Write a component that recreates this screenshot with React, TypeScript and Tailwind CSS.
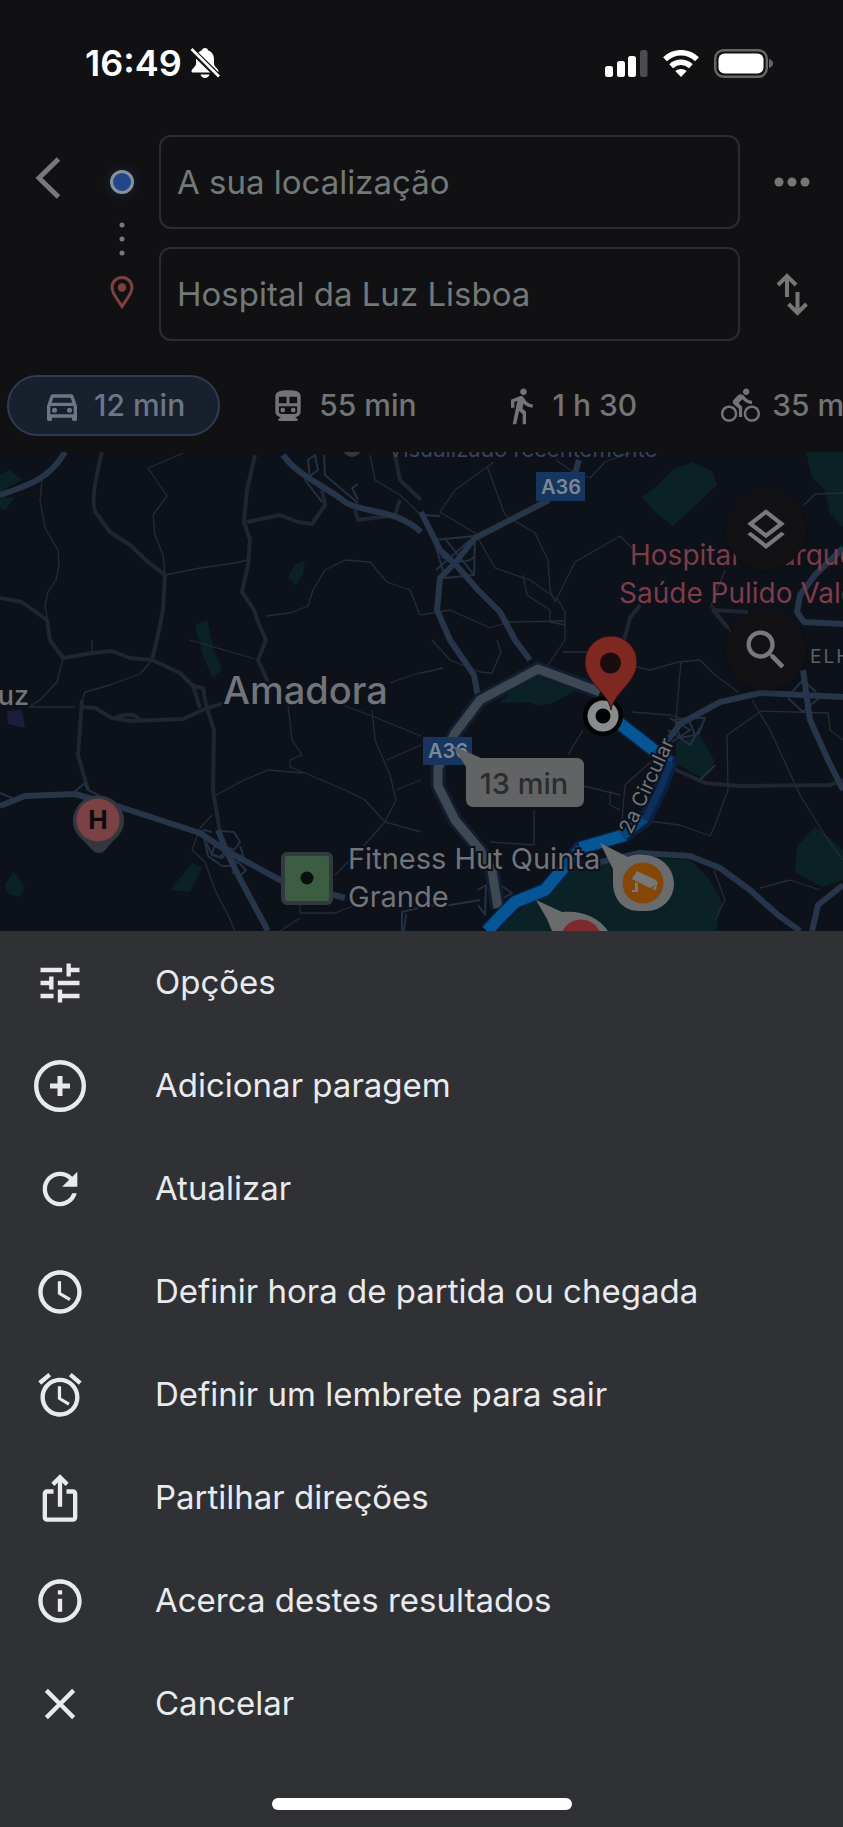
import type { ReactNode } from "react";
import {
  MdAccessTime,
  MdAlarm,
  MdClose,
  MdDirectionsBike,
  MdDirectionsWalk,
  MdIosShare,
  MdOutlineDirectionsCar,
  MdOutlineInfo,
  MdOutlineLayers,
  MdRefresh,
  MdSearch,
  MdTune,
} from "react-icons/md";
import { clsx } from "clsx";

function AddStopIcon() {
  return (
    <svg viewBox="0 0 52 52" className="size-[52px]" fill="none" stroke="currentColor">
      <circle cx="26" cy="26" r="23.8" strokeWidth="4.4" />
      <path d="M26 16v20M16 26h20" strokeWidth="5" />
    </svg>
  );
}

function TrainIcon() {
  return (
    <svg viewBox="0 0 24 24" className="size-[38px]" fill="currentColor" fillRule="evenodd">
      <path d="M12 2C8 2 4 2.500 4 6v9.500C4 17.400 5.600 19 7.500 19L6 20.200V21.500h12v-1.300L16.500 19c1.900 0 3.500-1.600 3.500-3.500V6c0-3.500-3.600-4-8-4zM6.200 6.200h4.900v4H6.200zM12.900 6.200h4.900v4h-4.900zM6.200 12.200h11.600v3.300c0 .9-.7 1.600-1.600 1.600H7.800c-.9 0-1.600-.7-1.600-1.600z" />
      <circle cx="8.700" cy="14.600" r="1.500" />
      <circle cx="15.300" cy="14.600" r="1.500" />
    </svg>
  );
}

const modes = [
  { label: "12 min", icon: <MdOutlineDirectionsCar size={40} />, active: true },
  { label: "55 min", icon: <TrainIcon /> },
  { label: "1 h 30", icon: <MdDirectionsWalk size={40} /> },
  { label: "35 min", icon: <MdDirectionsBike size={39} /> },
];

const actions: { label: string; icon: ReactNode }[] = [
  { label: "Opções", icon: <MdTune size={52} /> },
  { label: "Adicionar paragem", icon: <AddStopIcon /> },
  { label: "Atualizar", icon: <MdRefresh size={52} /> },
  { label: "Definir hora de partida ou chegada", icon: <MdAccessTime size={52} /> },
  { label: "Definir um lembrete para sair", icon: <MdAlarm size={52} /> },
  { label: "Partilhar direções", icon: <MdIosShare size={52} /> },
  { label: "Acerca destes resultados", icon: <MdOutlineInfo size={52} /> },
  { label: "Cancelar", icon: <MdClose size={52} /> },
];

function StatusBar() {
  return (
    <div className="flex h-[126px] items-center justify-between pr-[70px] pl-[85px] text-white">
      <div className="flex items-center gap-2">
        <span className="text-[36px] font-semibold">16:49</span>
        <svg viewBox="0 0 30 32" className="h-8 w-[30px]">
          <path
            d="M15 1c-1.700 0-2.900 1-3.200 2.500C8 4.800 6 8 6 12v5c0 2.500-4.500 5-4.500 7.200 0 1 .8 1.300 1.800 1.300h23.400c1 0 1.800-.3 1.800-1.300 0-2.200-4.500-4.700-4.500-7.200v-5c0-4-2-7.200-5.800-8.500C17.900 2 16.700 1 15 1zM10.500 27.500h9c-.6 2.200-2.300 3.500-4.500 3.500s-3.900-1.300-4.500-3.500z"
            fill="currentColor"
          />
          <path d="M1 2.500 29 30" stroke="#111113" strokeWidth="6" />
          <path d="M1.500 2 29 29.500" stroke="currentColor" strokeWidth="2.600" />
        </svg>
      </div>
      <div className="flex items-center gap-[15px]">
        <svg viewBox="0 0 43 27" className="h-[27px] w-[43px]" fill="currentColor">
          <rect x="0" y="16" width="8" height="11" rx="2.500" />
          <rect x="12" y="11" width="8" height="16" rx="2.500" />
          <rect x="23" y="6" width="8" height="21" rx="2.500" />
          <rect x="35" y="0" width="7.500" height="27" rx="2.500" opacity="0.250" />
        </svg>
        <svg viewBox="0 0 36 27" className="h-[27px] w-9" fill="none" stroke="currentColor" strokeWidth="5.600">
          <path d="M2 9.200C11.300.6 24.700.6 34 9.200" />
          <path d="M8.200 16.200c5.600-5.200 14-5.200 19.600 0" />
          <path d="M18 27l-5.700-5.900c3.300-2.900 8.100-2.900 11.400 0z" fill="currentColor" stroke="none" />
        </svg>
        <svg viewBox="0 0 59 29" className="h-[29px] w-[59px]">
          <rect x="1.200" y="1.200" width="51.600" height="26.600" rx="8.500" fill="none" stroke="#666668" strokeWidth="2.400" />
          <rect x="4.500" y="4.500" width="45" height="20" rx="6" fill="currentColor" />
          <path d="M55 10c2.500.7 4 2.200 4 4.500s-1.500 3.800-4 4.500z" fill="#666668" />
        </svg>
      </div>
    </div>
  );
}

function RouteForm() {
  const field =
    "h-[94px] w-full rounded-xl border-2 border-[#2b2d30] bg-transparent px-4 text-[33px] text-[#727978] outline-none";
  return (
    <form className="grid grid-cols-[92px_60px_minmax(0,1fr)_103px] items-center pt-[9px]">
      <button
        type="button"
        aria-label="Voltar"
        className="mb-[18px] grid h-[94px] place-items-center pb-2 pl-1 text-[#76787b]"
      >
        <svg viewBox="0 0 26 42" className="h-[42px] w-[26px]" fill="none" stroke="currentColor" strokeWidth="5">
          <path d="M23.500 2 4 21l19.500 19" />
        </svg>
      </button>
      <div className="row-span-2 mb-1.5 grid justify-items-center text-[#77797c]">
        <div className="grid h-10 w-10 place-items-center rounded-full bg-[radial-gradient(#14233f,transparent_70%)]">
          <span className="size-6 rounded-full border-[3px] border-[#8b8f98] bg-[#22468a]" />
        </div>
        <svg viewBox="0 0 6 34" className="mt-5 h-[34px] w-1.5" fill="currentColor">
          <circle cx="3" cy="3" r="2.500" />
          <circle cx="3" cy="17" r="2.500" />
          <circle cx="3" cy="31" r="2.500" />
        </svg>
        <svg viewBox="0 0 24 33" className="mt-5 h-[33px] w-6" fill="none" stroke="#7e4040" strokeWidth="3">
          <path d="M12 30.500C9 25 2 18 2 11.500a10 10 0 0 1 20 0C22 18 15 25 12 30.500z" />
          <circle cx="12" cy="11.500" r="4.200" fill="#7e4040" stroke="none" />
        </svg>
      </div>
      <div className="mb-[18px] ml-[7px]">
        <input aria-label="Partida" className={field} defaultValue="A sua localização" />
      </div>
      <button type="button" aria-label="Mais opções" className="mb-[18px] grid h-[94px] place-items-center text-[#737877]">
        <svg viewBox="0 0 36 10" className="h-2.5 w-9" fill="currentColor">
          <circle cx="5" cy="5" r="4.500" />
          <circle cx="18" cy="5" r="4.500" />
          <circle cx="31" cy="5" r="4.500" />
        </svg>
      </button>
      <div className="col-start-3 ml-[7px]">
        <input aria-label="Destino" className={field} defaultValue="Hospital da Luz Lisboa" />
      </div>
      <button type="button" aria-label="Trocar partida e destino" className="grid h-[94px] place-items-center text-[#737877]">
        <svg viewBox="0 0 32 43" className="h-[43px] w-8" fill="none" stroke="currentColor" strokeWidth="4">
          <path d="M11 24V3M2 12l9-9 9 9M21.500 19v21M12.500 31l9 9 9-9" />
        </svg>
      </button>
    </form>
  );
}

function ModeTabs() {
  return (
    <nav className="flex gap-3.5 overflow-hidden pt-[34px] pb-4 pl-[7px]">
      {modes.map((m) => (
        <button
          key={m.label}
          className={clsx(
            "flex h-[61px] shrink-0 items-center gap-3 rounded-full border-2 px-[33px] text-[30px] font-medium whitespace-nowrap",
            m.active ? "border-[#2f3b52] bg-[#18202e] text-[#6b7686]" : "border-transparent text-[#727477]",
          )}
        >
          {m.icon}
          {m.label}
        </button>
      ))}
    </nav>
  );
}

const parks = [
  "642,497 660,483 672,470 692,462 712,471 717,485 698,503 673,526 655,512",
  "806,452 843,452 843,528 830,513 825,490 812,478",
  "500,703 515,687 538,675 562,680 592,690 572,692 556,702 540,706 528,702",
  "487,931 540,896 572,862 640,857 690,860 710,880 722,902 716,931",
  "815,827 830,838 843,850 843,880 822,887 795,872 797,846",
  "676,742 700,735 715,762 702,778 676,764",
  "0,475 10,470 22,480 0,492",
  "0,497 15,498 5,510 0,508",
  "294,565 305,560 303,574 296,585 288,578",
  "195,625 207,620 214,650 222,670 212,678 203,655",
  "170,890 192,863 202,868 190,892",
  "5,884 14,872 25,887 20,897 8,894",
];

const lanes = [
  "M42 480 40 500 45 528 58 550 59 565 56 580 48 592 45 606 48 622",
  "M183 453 148 468 167 496 153 515 155 535 163 555 165 575 200 568 235 563 248 560",
  "M266 616 290 613 308 606 313 590 325 570 345 560 370 562 387 582 410 590 420 615",
  "M370 455 375 480 400 495 421 515",
  "M494 462 455 490 440 512 475 533 495 568 530 580 558 600 565 612 565 640 543 672",
  "M487 466 505 515 535 533 548 560 550 590 555 602 575 562 620 536 632 548",
  "M556 460 573 472 590 478 605 462 630 453",
  "M523 575 527 595 550 610 550 622 565 625",
  "M421 615 450 610 490 628 508 622 565 621",
  "M421 673 443 668M432 640 450 660 480 672 492 673 501 652 497 640",
  "M152 660 140 674 110 685 85 692 80 707M63 658 57 682 40 700 28 707 75 707",
  "M92 653 92 640M190 640 255 659",
  "M288 705 292 740 302 755 290 760 290 767 305 773 345 790 365 800 385 822 421 832",
  "M213 797 240 782 268 770 303 773",
  "M372 710 375 740 390 775 396 800 385 822 360 850 335 875",
  "M345 706 372 716 421 736M390 683 421 672M387 760 421 745M396 790 421 780",
  "M212 815 200 828 192 850 205 862 215 890 228 915 235 931",
  "M300 890 300 913 335 913 355 905M300 918 280 931",
  "M563 652 598 652 625 664 650 670 678 662 700 660 715 675 738 692",
  "M681 661 676 720M632 712 670 715 686 720M583 730 568 755",
  "M752 700 770 730 800 795 828 840 843 860M760 712 727 735 728 790 715 825 710 836 680 825 640 820",
  "M760 711 828 713 830 730 843 740M620 810 610 805 610 792 620 795 600 790 580 785",
  "M655 758 625 785 622 820M534 810 534 845 490 842",
  "M714 870 725 900 715 920M760 888 790 880 820 890M843 493 815 494 804 505",
  "M712 605 740 645M710 608 725 570",
];

const streets = [
  "M102 452C95 480 90 508 97 514L110 532 130 545 148 562 165 575 163 610 158 635 152 660",
  "M0 598 22 602 47 620 50 640 63 658 92 653 112 651 130 658 152 660 180 673 193 686 200 708M193 686 203 688 206 705 214 730 213 790 220 833",
  "M80 707 95 708 112 718 130 721 183 719 207 708 225 703M113 719C125 712 138 714 140 721",
  "M82 700 78 755 88 790",
  "M255 455 247 490 244 522 250 540 248 565 242 592 254 610 258 622 266 640 258 660 268 682",
  "M247 522 280 515 298 522 312 524 325 505 322 490",
  "M395 455 400 480 421 500M355 510 358 520 395 515 400 500",
  "M672 768 705 783 740 786 830 785 843 780",
  "M624 640 630 618 640 605",
  "M713 610 748 612M712 609 728 628",
];

const highways = [
  "M65 452C50 478 30 485 0 495",
  "M283 455C300 478 325 485 345 502C365 514 395 508 421 532",
  "M421 512 440 550 456 565 478 590 500 612 515 640 530 660",
  "M549 500 475 538 455 563 440 578 437 610 450 640 474 675 478 697",
  "M575 473 579 460",
  "M0 806 25 796 75 794 120 807 200 833 225 850 280 880 345 898",
  "M218 830 226 850 238 875 268 931",
  "M655 757 680 724 720 702 760 693 843 697",
  "M803 670 810 720 828 760 843 790",
  "M600 862 640 853 690 856 720 868 750 890 778 915 800 931",
  "M812 931 818 905 843 885",
  "M843 548 815 575 800 595 797 612 804 622 843 624",
];

// ramps and slip roads around the junctions
const ramps = [
  "M434 540 475 536 474 575 445 578zM446 540 474 575M470 540 436 570M441 556C448 562 468 565 475 556",
  "M421 515 440 516M310 478 308 460 315 455 318 470 305 480 322 502M324 455 325 475 358 503M358 500 352 488 358 484",
  "M220 831 234 832 240 842 234 850 226 847zM206 842 212 855 222 858 232 848M214 847 220 845 226 850 220 857 212 854z",
  "M197 836 204 830 212 832M204 838 208 856 222 866 234 866M240 846 244 858 234 864M228 856 240 864 246 870 240 876 232 872",
  "M73 793 85 783 88 790 100 796M0 793 12 798",
  "M675 720 688 718 695 735 680 738zM668 730 690 745 700 728M670 718 690 730 672 742M698 735 705 718 688 718",
  "M700 780 715 765",
  "M788 698 803 712 820 697M792 692 803 680 816 692",
  "M478 890 486 885 485 915 478 905M500 885 512 893 500 900",
  "M421 906 450 905 480 900M402 931 402 912 430 905M404 931 406 914",
];

const altRoute = "M600 692 538 669 480 700 455 733 438 768 438 786 455 820 480 850 492 870 498 908";

function MapDrawing() {
  return (
    <svg
      viewBox="0 452 843 479"
      preserveAspectRatio="xMidYMid slice"
      className="block h-[479px] w-full font-['Inter',sans-serif]"
    >
      <rect y="452" width="843" height="479" fill="#0d111a" />
      <g fill="#0a2125">
        {parks.map((p) => (
          <polygon key={p} points={p} />
        ))}
      </g>
      <path d="M7 711 22 710 25 728 8 724z" fill="#1c1d3d" />
      <g fill="none" strokeLinejoin="round">
        <g stroke="#262b34" strokeWidth="1.300">
          {lanes.map((d) => (
            <path key={d} d={d} />
          ))}
        </g>
        <g stroke="#1f2631" strokeWidth="4">
          {streets.map((d) => (
            <path key={d} d={d} />
          ))}
        </g>
        <g stroke="#233043" strokeWidth="2">
          {ramps.map((d) => (
            <path key={d} d={d} />
          ))}
        </g>
        <g stroke="#263549" strokeWidth="6">
          {highways.map((d) => (
            <path key={d} d={d} />
          ))}
        </g>
        {/* alternative route */}
        <path d={altRoute} stroke="#131d31" strokeWidth="15" />
        <path d={altRoute} stroke="#3d4853" strokeWidth="9" />
        {/* selected route */}
        <path
          d="M615 720 655 751 670 762 662 785 645 820 622 836 580 848 565 868 545 890 515 902 503 914 487 931"
          stroke="#0b1f40"
          strokeWidth="15"
        />
        <path d="M615 720 655 751M625 835 580 848M565 866 545 890 515 902 503 914 487 931" stroke="#065594" strokeWidth="12" />
        <path d="M655 751 671 762M645 818 622 836M580 848 565 866" stroke="#08457d" strokeWidth="10" />
        <path d="M671 762 662 785 645 820" stroke="#0b305c" strokeWidth="7" />
      </g>

      <circle cx="352" cy="448" r="9" fill="#32363d" />
      <text x="388" y="457" fontSize="22" fill="#3a4453">
        Visualizado recentemente
      </text>

      <g fontWeight="600" fontSize="20" fill="#7c8795" textAnchor="middle">
        <rect x="536" y="472" width="49" height="29" fill="#16365f" />
        <text x="561" y="494">A36</text>
        <rect x="423" y="737" width="49" height="28" fill="#16365f" />
        <text x="448" y="758">A36</text>
      </g>

      <g fill="#7d3c48" fontSize="28">
        <text x="630" y="565">Hospital</text>
        <text x="762" y="565">Parque</text>
        <text x="619" y="603">Saúde Pulido Valente</text>
      </g>
      <text x="810" y="663" fontSize="19" fill="#5d6063" letterSpacing="2">
        ELHAS
      </text>
      <g fill="#717479" stroke="#0d111a" strokeWidth="4" paintOrder="stroke">
        <text x="223" y="704" fontSize="38" fontWeight="500">
          Amadora
        </text>
        <text x="-9" y="705" fontSize="27" fontWeight="500">
          luz
        </text>
        <text x="348" y="869" fontSize="29">
          Fitness Hut Quinta
        </text>
        <text x="348" y="907" fontSize="29">
          Grande
        </text>
        <text transform="translate(631 835) rotate(-65)" fontSize="20">
          2a Circular
        </text>
      </g>

      {/* hospital */}
      <path d="M99 853c-6 0-9-6-15-12-7-6-11-12-11-20a25 25 0 0 1 51 0c0 8-4 14-11 20-6 6-8 12-14 12z" fill="#33373e" />
      <circle cx="98" cy="820" r="21.500" fill="#7b4144" />
      <text x="98" y="829" textAnchor="middle" fontSize="26" fontWeight="700" fill="#0c0c0e">
        H
      </text>

      {/* gym */}
      <rect x="283" y="854" width="48" height="49" rx="4" fill="#3c5d42" stroke="#333941" strokeWidth="4" />
      <circle cx="307" cy="878" r="6.500" fill="#0b0f0c" />

      {/* duration bubble */}
      <path d="M453 746 481 758h96a7 7 0 0 1 7 7v35a7 7 0 0 1-7 7H473a7 7 0 0 1-7-7v-33z" fill="#626364" />
      <text x="524" y="794" textAnchor="middle" fontSize="29" fontWeight="500" fill="#2b2c2d">
        13 min
      </text>

      {/* destination */}
      <circle cx="603" cy="716" r="20" fill="#020305" />
      <circle cx="603" cy="716" r="11.500" fill="none" stroke="#8a8b8c" strokeWidth="8" />
      <path
        d="M611 710c-3-18-26-27-26-48a26 26 0 0 1 52 0c0 21-23 30-26 48z"
        fill="#7f2721"
        stroke="#2b1214"
        strokeWidth="1"
      />
      <circle cx="610.500" cy="663" r="10.500" fill="#1a0d0f" />

      {/* speed camera */}
      <path d="M600 843 628 857c6-3 12-3 18-2 17 2 28 14 28 29a27 27 0 0 1-27 27h-8c-15 0-25-11-26-26v-16z" fill="#6a6b6d" />
      <circle cx="643" cy="883" r="20.500" fill="#854708" />
      <g fill="#77787a">
        <path d="M637 871 656 880 658 884 650 888 632 879z" />
        <path d="M652 889 657 884 656 890z" />
        <path d="M638 883v9h-6v-2h3v-8z" />
      </g>

      {/* incident */}
      <path d="M536 900 562 912c18-2 36 4 46 19h-56l-5-12z" fill="#6a6b6d" />
      <circle cx="581" cy="940" r="20.500" fill="#7c2a2d" />
    </svg>
  );
}

function MapView() {
  const round = "grid size-20 place-items-center rounded-full bg-[#121214] text-[#77797b] shadow-md";
  return (
    <section aria-label="Mapa" className="relative overflow-hidden">
      <MapDrawing />
      <div className="absolute top-[38px] right-[37px] flex flex-col gap-10">
        <button aria-label="Camadas" className={round}>
          <MdOutlineLayers size={50} />
        </button>
        <button aria-label="Pesquisar" className={round}>
          <MdSearch size={52} />
        </button>
      </div>
    </section>
  );
}

function ActionSheet() {
  return (
    <div role="menu" className="flex-1 bg-[#303135] text-[#e9eaee]">
      {actions.map((a) => (
        <button
          key={a.label}
          role="menuitem"
          className="flex h-[103px] w-full items-center gap-[69px] pl-[34px] text-left text-[33px]"
        >
          <span className="shrink-0">{a.icon}</span>
          {a.label}
        </button>
      ))}
      <div className="mx-auto mt-[43px] mb-4 h-3 w-[300px] rounded-full bg-white" />
    </div>
  );
}

export default function App() {
  return (
    <div className="flex min-h-screen flex-col bg-[#111113] font-['Inter',sans-serif]">
      <header>
        <StatusBar />
        <RouteForm />
        <ModeTabs />
      </header>
      <MapView />
      <ActionSheet />
    </div>
  );
}
